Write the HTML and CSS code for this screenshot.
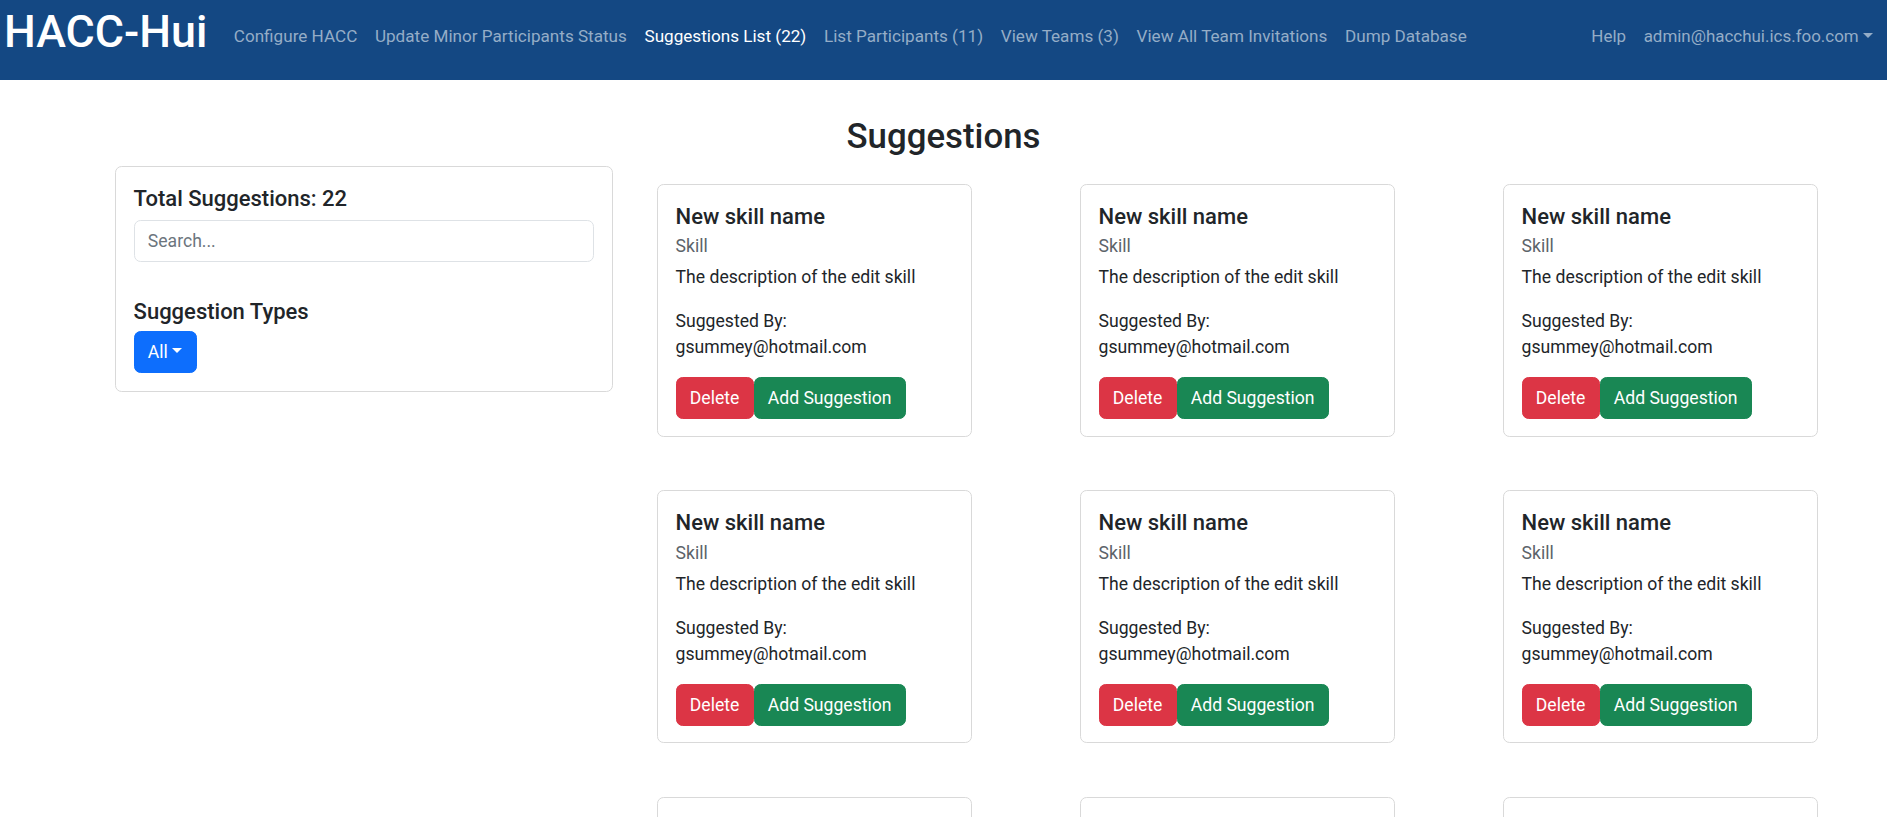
FILE: index.html
```html
<!DOCTYPE html>
<html lang="en">
<head>
<meta charset="utf-8">
<title>HACC-Hui</title>
<link rel="stylesheet" href="styles.css">
</head>
<body>
<nav class="navbar">
  <a class="brand" href="#">HACC-Hui</a>
  <ul class="nav nav-main">
    <li><a class="nav-link" href="#">Configure HACC</a></li>
    <li><a class="nav-link" href="#">Update Minor Participants Status</a></li>
    <li><a class="nav-link active" href="#">Suggestions List (22)</a></li>
    <li><a class="nav-link" href="#">List Participants (11)</a></li>
    <li><a class="nav-link" href="#">View Teams (3)</a></li>
    <li><a class="nav-link" href="#">View All Team Invitations</a></li>
    <li><a class="nav-link" href="#">Dump Database</a></li>
  </ul>
  <ul class="nav nav-right">
    <li><a class="nav-link" href="#">Help</a></li>
    <li><a class="nav-link caret" href="#">admin@hacchui.ics.foo.com</a></li>
  </ul>
</nav>

<main class="page">
  <h2 class="page-title">Suggestions</h2>
  <div class="layout">
    <aside class="card side-card">
      <h5 class="card-title">Total Suggestions: 22</h5>
      <input class="search" type="text" placeholder="Search...">
      <h5 class="card-title types-title">Suggestion Types</h5>
      <button class="btn btn-primary caret" type="button">All</button>
    </aside>

    <section class="grid">
      <div class="card sugg">
        <h5 class="card-title">New skill name</h5>
        <h6 class="card-subtitle">Skill</h6>
        <p class="card-text">The description of the edit skill</p>
        <p class="card-text">Suggested By:<br>gsummey@hotmail.com</p>
        <div class="actions"><button class="btn btn-danger">Delete</button><button class="btn btn-success">Add Suggestion</button></div>
      </div>
      <div class="card sugg">
        <h5 class="card-title">New skill name</h5>
        <h6 class="card-subtitle">Skill</h6>
        <p class="card-text">The description of the edit skill</p>
        <p class="card-text">Suggested By:<br>gsummey@hotmail.com</p>
        <div class="actions"><button class="btn btn-danger">Delete</button><button class="btn btn-success">Add Suggestion</button></div>
      </div>
      <div class="card sugg">
        <h5 class="card-title">New skill name</h5>
        <h6 class="card-subtitle">Skill</h6>
        <p class="card-text">The description of the edit skill</p>
        <p class="card-text">Suggested By:<br>gsummey@hotmail.com</p>
        <div class="actions"><button class="btn btn-danger">Delete</button><button class="btn btn-success">Add Suggestion</button></div>
      </div>
      <div class="card sugg">
        <h5 class="card-title">New skill name</h5>
        <h6 class="card-subtitle">Skill</h6>
        <p class="card-text">The description of the edit skill</p>
        <p class="card-text">Suggested By:<br>gsummey@hotmail.com</p>
        <div class="actions"><button class="btn btn-danger">Delete</button><button class="btn btn-success">Add Suggestion</button></div>
      </div>
      <div class="card sugg">
        <h5 class="card-title">New skill name</h5>
        <h6 class="card-subtitle">Skill</h6>
        <p class="card-text">The description of the edit skill</p>
        <p class="card-text">Suggested By:<br>gsummey@hotmail.com</p>
        <div class="actions"><button class="btn btn-danger">Delete</button><button class="btn btn-success">Add Suggestion</button></div>
      </div>
      <div class="card sugg">
        <h5 class="card-title">New skill name</h5>
        <h6 class="card-subtitle">Skill</h6>
        <p class="card-text">The description of the edit skill</p>
        <p class="card-text">Suggested By:<br>gsummey@hotmail.com</p>
        <div class="actions"><button class="btn btn-danger">Delete</button><button class="btn btn-success">Add Suggestion</button></div>
      </div>
      <div class="card sugg">
        <h5 class="card-title">New skill name</h5>
        <h6 class="card-subtitle">Skill</h6>
        <p class="card-text">The description of the edit skill</p>
        <p class="card-text">Suggested By:<br>gsummey@hotmail.com</p>
        <div class="actions"><button class="btn btn-danger">Delete</button><button class="btn btn-success">Add Suggestion</button></div>
      </div>
      <div class="card sugg">
        <h5 class="card-title">New skill name</h5>
        <h6 class="card-subtitle">Skill</h6>
        <p class="card-text">The description of the edit skill</p>
        <p class="card-text">Suggested By:<br>gsummey@hotmail.com</p>
        <div class="actions"><button class="btn btn-danger">Delete</button><button class="btn btn-success">Add Suggestion</button></div>
      </div>
      <div class="card sugg">
        <h5 class="card-title">New skill name</h5>
        <h6 class="card-subtitle">Skill</h6>
        <p class="card-text">The description of the edit skill</p>
        <p class="card-text">Suggested By:<br>gsummey@hotmail.com</p>
        <div class="actions"><button class="btn btn-danger">Delete</button><button class="btn btn-success">Add Suggestion</button></div>
      </div>
    </section>
  </div>
</main>
</body>
</html>
```
FILE: styles.css
```css
html { scrollbar-width: none; }
html::-webkit-scrollbar { display: none; }

* { box-sizing: border-box; }

body {
  margin: 0;
  font-family: Roboto, "Noto Sans", "Liberation Sans", sans-serif;
  font-size: 17.6px;
  line-height: 1.5;
  color: #212529;
  background: #fff;
}

/* ---------- navbar ---------- */
.navbar {
  display: flex;
  align-items: flex-start;
  height: 80px;
  padding: 5px 5.2px 0 4px;
  background: #144883;
}

.brand {
  font-size: 44.8px;
  font-weight: 500;
  line-height: 53.6px;
  color: #fff;
  text-decoration: none;
  margin-right: 17.6px;
}

.nav {
  display: flex;
  list-style: none;
  margin: 17.9px 0 0;
  padding: 0;
}

.nav-right {
  margin-left: auto;
}

.nav-link {
  display: block;
  padding: 0 8.8px;
  font-size: 17.12px;
  line-height: 26.4px;
  color: #95adc7;
  text-decoration: none;
  white-space: nowrap;
}

.nav-right .nav-link { font-size: 16.95px; }

.nav-link.active { color: #fff; }

.caret::after {
  content: "";
  display: inline-block;
  margin-left: 0.255em;
  vertical-align: 0.255em;
  border-top: 0.3em solid;
  border-right: 0.3em solid transparent;
  border-left: 0.3em solid transparent;
  border-bottom: 0;
}

/* ---------- page ---------- */
.page {
  padding-top: 35.7px;
}

.page-title {
  margin: 0 0 8.8px;
  text-align: center;
  font-size: 34.8px;
  font-weight: 500;
  line-height: 1.2;
}

.layout {
  display: flex;
  align-items: flex-start;
  gap: 44px;
  padding-left: 115px;
}

.card {
  background: #fff;
  border: 1px solid #d9d9d9;
  border-radius: 6.6px;
  padding: 17.6px;
}

.side-card {
  width: 498px;
  flex: none;
}

.card-title {
  margin: 0 0 7.3px;
  padding-top: 1.5px;
  font-size: 22px;
  font-weight: 500;
  line-height: 1.2;
}

.search {
  display: block;
  width: 100%;
  height: 41.8px;
  padding: 6.6px 13.2px;
  font: inherit;
  color: #212529;
  border: 1px solid #dee2e6;
  border-radius: 6.6px;
  outline: none;
}

.search::placeholder { color: #6c757d; }

.types-title {
  margin-top: 36px;
  margin-bottom: 5.5px;
}

.btn {
  display: inline-block;
  height: 41.8px;
  padding: 6.6px 13.2px;
  font: inherit;
  line-height: 26.4px;
  color: #fff;
  border: 1px solid transparent;
  border-radius: 6.6px;
  cursor: pointer;
}

.btn-primary { background: #0d6efd; border-color: #0d6efd; }
.btn-danger { background: #dc3545; border-color: #dc3545; }
.btn-success { background: #198754; border-color: #198754; }

/* ---------- suggestion grid ---------- */
.grid {
  display: grid;
  grid-template-columns: repeat(3, 315px);
  column-gap: 108px;
  row-gap: 53.5px;
  margin-top: 17.6px;
}

.card-subtitle {
  margin: -4.4px 0 4.5px;
  font-size: 17.6px;
  font-weight: 400;
  line-height: 1.5;
  color: #5c636a;
}

.card-text {
  margin: 0 0 17.6px;
}

.sugg .card-text:last-of-type {
  margin-bottom: 16.6px;
}

.sugg {
  padding-bottom: 16.6px;
}

.actions {
  display: flex;
}
```
